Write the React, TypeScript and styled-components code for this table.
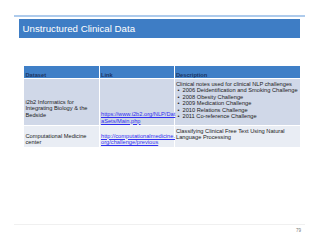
import styled, { createGlobalStyle } from "styled-components";

const Global = createGlobalStyle`
  html, body {
    margin: 0;
    padding: 0;
    background: #ffffff;
  }
  body {
    font-family: "Liberation Sans", Arial, sans-serif;
  }
`;

const Slide = styled.div`
  width: 320px;
  height: 247px;
  display: flex;
  flex-direction: column;
  box-sizing: border-box;
  padding-top: 15px;
`;

const TopRule = styled.div`
  margin: 0 15px 0 14px;
  height: 2px;
  background: #aecbec;
`;

const TitleBar = styled.div`
  margin: 2px 20px 0 19px;
  height: 19px;
  background: #3e7dc5;
  display: flex;
  align-items: center;
  padding-left: 3.5px;
  color: #ffffff;
  font-size: 9.7px;
`;

const Table = styled.table`
  margin: 28px 0 0 24px;
  width: 276px;
  border-collapse: collapse;
  table-layout: fixed;
  font-size: 5.7px;
  line-height: 6.5px;
  color: #222222;
`;

const HeadCell = styled.th`
  background: #3f7fc7;
  color: #1c3563;
  font-weight: bold;
  text-align: left;
  height: 12px;
  padding: 0 1px 0 1.5px;
  vertical-align: bottom;
  border-left: 1px solid #ffffff;
  &:first-child {
    border-left: none;
  }
`;

const Row = styled.tr<{ $shade: string; $h: number }>`
  background: ${(p) => p.$shade};
  height: ${(p) => p.$h}px;
  border-top: 1px solid #ffffff;
`;

const Cell = styled.td<{ $align?: string; $pb?: number }>`
  vertical-align: ${(p) => p.$align || "top"};
  padding: 1.5px 1px ${(p) => p.$pb ?? 1}px 1.5px;
  border-left: 1px solid #ffffff;
  &:first-child {
    border-left: none;
  }
`;

const Link = styled.a`
  color: #3030f0;
  text-decoration: underline;
  white-space: nowrap;
`;

const Bullets = styled.ul`
  margin: 0;
  padding: 0;
  list-style: none;
  white-space: nowrap;
  li::before {
    content: "•";
    display: inline-block;
    width: 5px;
    padding-left: 1.5px;
  }
`;

const Footer = styled.div`
  margin-top: auto;
  margin-bottom: 14px;
`;

const BottomRule = styled.div`
  margin: 0 15px 0 14px;
  height: 1px;
  background: #f0f0f0;
`;

const PageNo = styled.div`
  text-align: right;
  padding-right: 19px;
  margin-top: 3px;
  font-size: 4.5px;
  color: #777777;
`;

const challenges = [
  "2006 Deidentification and Smoking Challenge",
  "2008 Obesity Challenge",
  "2009 Medication Challenge",
  "2010 Relations Challenge",
  "2011 Co-reference Challenge",
];

export default function App() {
  return (
    <>
      <Global />
      <Slide>
        <TopRule />
        <TitleBar>Unstructured Clinical Data</TitleBar>
        <Table>
          <colgroup>
            <col style={{ width: 75 }} />
            <col style={{ width: 75 }} />
            <col style={{ width: 126 }} />
          </colgroup>
          <thead>
            <tr>
              <HeadCell>Dataset</HeadCell>
              <HeadCell>Link</HeadCell>
              <HeadCell>Description</HeadCell>
            </tr>
          </thead>
          <tbody>
            <Row $shade="#d0d8e8" $h={47}>
              <Cell $align="bottom" $pb={7}>
                i2b2 Informatics for Integrating Biology &amp; the Bedside
              </Cell>
              <Cell $align="bottom" $pb={1}>
                <Link>
                  https://www.i2b2.org/NLP/Dat
                  <br />
                  aSets/Main.php
                </Link>
              </Cell>
              <Cell>
                Clinical notes used for clinical NLP challenges
                <Bullets>
                  {challenges.map((c) => (
                    <li key={c}>{c}</li>
                  ))}
                </Bullets>
              </Cell>
            </Row>
            <Row $shade="#e9edf4" $h={21}>
              <Cell $align="bottom">Computational Medicine center</Cell>
              <Cell $align="bottom">
                <Link>
                  http://computationalmedicine.
                  <br />
                  org/challenge/previous
                </Link>
              </Cell>
              <Cell>Classifying Clinical Free Text Using Natural Language Processing</Cell>
            </Row>
          </tbody>
        </Table>
        <Footer>
          <BottomRule />
          <PageNo>79</PageNo>
        </Footer>
      </Slide>
    </>
  );
}
